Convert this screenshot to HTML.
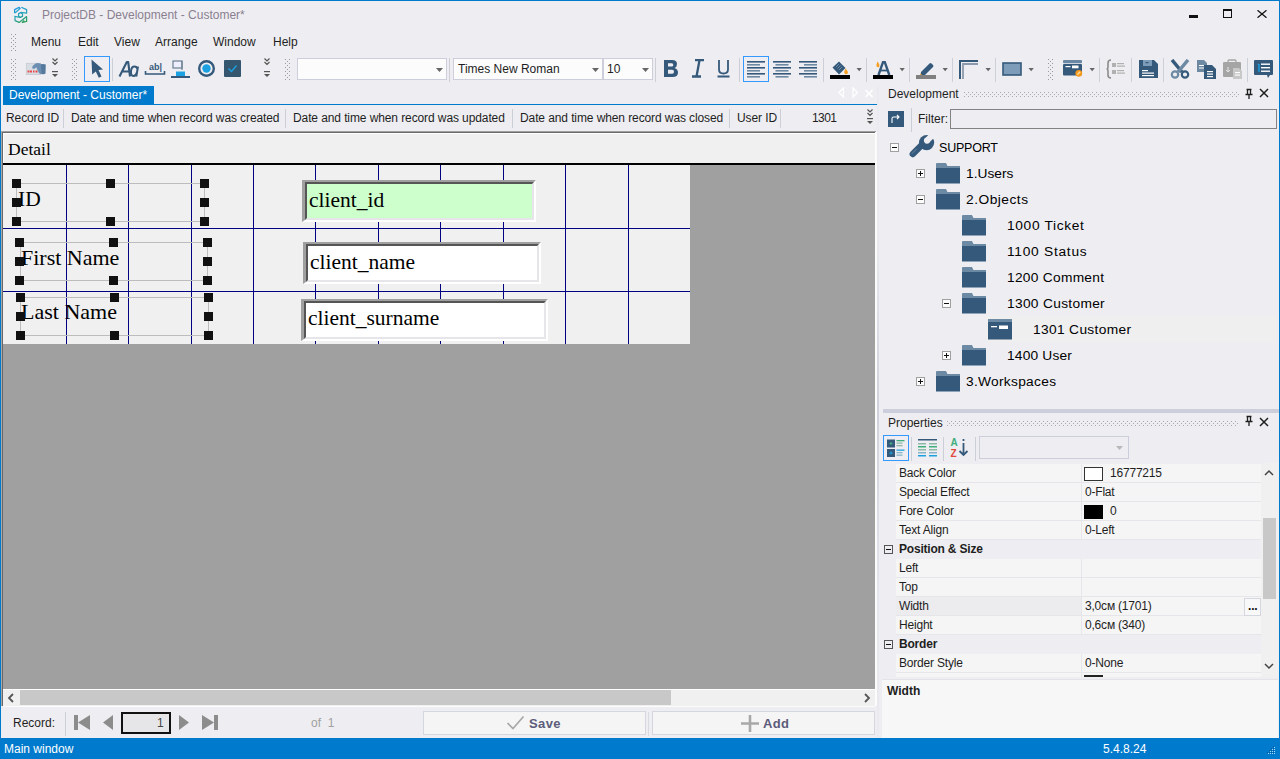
<!DOCTYPE html>
<html><head><meta charset="utf-8">
<style>
*{box-sizing:border-box;margin:0;padding:0}
html,body{width:1280px;height:759px;overflow:hidden;background:#eeeef2;font-family:"Liberation Sans",sans-serif;font-size:12px;color:#1e1e1e}
.a{position:absolute}
.t{position:absolute;white-space:pre;line-height:1}
.grip{position:absolute;width:6px;background-image:radial-gradient(circle,#999 0.8px,transparent 1px);background-size:3px 3px}
.sep{position:absolute;width:1px;background:#ccced8}
.serif{font-family:"Liberation Serif",serif}
</style></head><body>
<svg width="0" height="0" style="position:absolute"><defs><pattern id="gp" width="4" height="4" patternUnits="userSpaceOnUse"><rect x="0" y="0" width="1" height="1" fill="#9a9a9a"/><rect x="2" y="2" width="1" height="1" fill="#9a9a9a"/></pattern><pattern id="dp" width="4" height="4" patternUnits="userSpaceOnUse"><rect x="0" y="0" width="1" height="1" fill="#a8a8ae"/><rect x="2" y="2" width="1" height="1" fill="#a8a8ae"/></pattern></defs></svg>
<!-- window border -->

<!-- title bar -->
<svg class="a" style="left:10px;top:4px" width="22" height="22" viewBox="0 0 22 22">
<defs><linearGradient id="lg" gradientUnits="userSpaceOnUse" x1="4" y1="3" x2="12" y2="19"><stop offset="0" stop-color="#1e96e6"/><stop offset="0.55" stop-color="#27a3b8"/><stop offset="1" stop-color="#2c9e5a"/></linearGradient></defs>
<g fill="none" stroke="url(#lg)" stroke-width="1.25" stroke-linejoin="round">
<path d="M4.6 9.3 L4.6 5.6 L9.2 3.3 L10.2 4.4 L5.2 8.8"/>
<path d="M11.3 3.3 L16.6 5.6 L16.6 9.2 L10.8 8.4"/>
<path d="M8.6 9.6 L10.7 8.6 L12.5 10.1 L12.5 12.4 L10.4 13.4 L8.6 12.3 Z"/>
<path d="M4.3 12.4 L10.4 13.4 M5 12.6 L5 16.6 L9.2 18.4 L16.6 12.6 L16.6 17.4 L12.4 18.5 L14.2 16.5"/>
</g></svg>
<div class="t" style="left:42px;top:9px;color:#8a8090">ProjectDB - Development - Customer*</div>
<div class="a" style="left:1189px;top:15px;width:9px;height:3px;background:#111"></div>
<div class="a" style="left:1223px;top:9px;width:9px;height:9px;border:1px solid #111;border-top-width:2px"></div>
<svg class="a" style="left:1257px;top:10px" width="10" height="8" viewBox="0 0 10 8"><path d="M0.5 0.3 L9.5 7.7 M9.5 0.3 L0.5 7.7" stroke="#111" stroke-width="1.3"/></svg>

<!-- menu bar -->
<svg class="a" style="left:11px;top:34px" width="6" height="18"><rect width="6" height="18" fill="url(#gp)"/></svg>
<div class="t" style="left:31px;top:36px">Menu</div>
<div class="t" style="left:78px;top:36px">Edit</div>
<div class="t" style="left:114px;top:36px">View</div>
<div class="t" style="left:155px;top:36px">Arrange</div>
<div class="t" style="left:213px;top:36px">Window</div>
<div class="t" style="left:273px;top:36px">Help</div>

<!-- TOOLBAR -->
<!-- toolbar -->
<svg class="a" style="left:11px;top:59px" width="6" height="22"><rect width="6" height="23" fill="url(#gp)"/></svg>
<svg class="a" style="left:25px;top:60px" width="22" height="17" viewBox="0 0 22 17">
<rect x="1.2" y="3.2" width="14.5" height="11.5" fill="#d8dde3" stroke="#bfc3ca" stroke-width="0.6"/>
<rect x="2.5" y="10.5" width="2" height="2" fill="#e84848"/><rect x="5" y="10.5" width="2" height="2" fill="#e84848"/><rect x="8" y="10.5" width="1.5" height="2" fill="#e84848"/><rect x="10.5" y="10.5" width="2" height="2" fill="#e84848"/>
<path d="M7.2 8.2 Q7.5 5 10.5 3.4 Q13 2.6 15.5 3.6 L17 5 L17 13.8 Q15 14.6 13.8 12.8 L11.2 7.2 Q9.2 9.6 7.2 8.2Z" fill="#6b8fb2"/>
<path d="M16 4.2 Q18.5 3.5 20.8 4.5 L20.5 13.5 Q19 14.8 16.5 14Z" fill="#55799c"/>
</svg>
<svg class="a" style="left:51px;top:57px" width="8" height="23" viewBox="0 0 8 23">
<path d="M1.5 1.5 L4 4 L6.5 1.5 M1.5 5 L4 7.5 L6.5 5" fill="none" stroke="#555" stroke-width="1.2"/>
<rect x="1" y="14" width="6" height="1.2" fill="#555"/><path d="M1 17 L7 17 L4 20Z" fill="#555"/>
</svg>
<svg class="a" style="left:72px;top:59px" width="6" height="22"><rect width="6" height="23" fill="url(#gp)"/></svg>
<div class="a" style="left:84px;top:56px;width:26px;height:26px;border:1px solid #3399ff"></div>
<svg class="a" style="left:86px;top:58px" width="22" height="22" viewBox="0 0 22 22">
<path d="M5.5 1.5 L17 11.5 L12.5 12 L15.5 18.5 L12.8 19.8 L9.8 13.5 L6.2 16.5 Z" fill="#35597a"/>
</svg>
<div class="sep" style="left:112px;top:58px;height:23px"></div>
<svg class="a" style="left:118px;top:60px" width="22" height="18" viewBox="0 0 22 18">
<path d="M1.5 16.5 L8.8 2 L10.2 2 L12 16.5 M4.3 11.5 L11.2 11.5" fill="none" stroke="#35597a" stroke-width="2.1" stroke-linejoin="round"/>
<path d="M20 6.5 L18.3 16.5 M19.5 9 Q18.8 6.5 16.5 6.5 Q13.5 6.5 13 11 Q12.6 16 15.5 16 Q18 16 18.8 12.5" fill="none" stroke="#35597a" stroke-width="2"/>
</svg>
<svg class="a" style="left:144px;top:58px" width="22" height="20" viewBox="0 0 22 20">
<text x="5" y="12" font-family="Liberation Sans" font-size="9" font-weight="bold" fill="#35597a">ab|</text>
<path d="M1.5 13 L1.5 16 L20.5 16 L20.5 13" fill="none" stroke="#35597a" stroke-width="1.6"/>
</svg>
<svg class="a" style="left:170px;top:59px" width="21" height="20" viewBox="0 0 21 20">
<rect x="3" y="2" width="9" height="7" fill="#eef" stroke="#6a7f92" stroke-width="1.2"/>
<path d="M12 2 L12 11" stroke="#6a7f92" stroke-width="1.2"/>
<rect x="6" y="12.5" width="9" height="5" fill="#1ba1e2"/>
<rect x="1" y="17" width="19" height="2" fill="#35597a"/>
</svg>
<svg class="a" style="left:197px;top:59px" width="19" height="19" viewBox="0 0 19 19">
<circle cx="9.5" cy="9.5" r="7.3" fill="none" stroke="#35597a" stroke-width="2.4"/>
<circle cx="9.5" cy="9.5" r="4.2" fill="#1ba1e2"/>
</svg>
<svg class="a" style="left:223px;top:59px" width="19" height="19" viewBox="0 0 19 19">
<rect x="1" y="1" width="17" height="17" rx="1" fill="#34566f"/>
<path d="M5.5 9.5 L8.5 12.5 L13.5 6.5" fill="none" stroke="#1ba1e2" stroke-width="1.4"/>
</svg>
<svg class="a" style="left:263px;top:57px" width="8" height="23" viewBox="0 0 8 23">
<path d="M1.5 1.5 L4 4 L6.5 1.5 M1.5 5 L4 7.5 L6.5 5" fill="none" stroke="#555" stroke-width="1.2"/>
<rect x="1" y="14" width="6" height="1.2" fill="#555"/><path d="M1 17 L7 17 L4 20Z" fill="#555"/>
</svg>
<svg class="a" style="left:285px;top:59px" width="6" height="22"><rect width="6" height="23" fill="url(#gp)"/></svg>
<!-- combos -->
<div class="a" style="left:297px;top:58px;width:150px;height:22px;background:#fcfcfc;border:1px solid #cccedb"></div>
<svg class="a" style="left:436px;top:68px" width="8" height="5"><path d="M0 0 L7 0 L3.5 4Z" fill="#666"/></svg>
<div class="sep" style="left:449px;top:58px;height:24px"></div>
<div class="a" style="left:453px;top:58px;width:150px;height:22px;background:#fcfcfc;border:1px solid #cccedb"></div>
<div class="t" style="left:458px;top:63px">Times New Roman</div>
<svg class="a" style="left:592px;top:68px" width="8" height="5"><path d="M0 0 L7 0 L3.5 4Z" fill="#666"/></svg>
<div class="a" style="left:603px;top:58px;width:50px;height:22px;background:#fcfcfc;border:1px solid #cccedb"></div>
<div class="t" style="left:607px;top:63px">10</div>
<svg class="a" style="left:642px;top:68px" width="8" height="5"><path d="M0 0 L7 0 L3.5 4Z" fill="#666"/></svg>
<div class="sep" style="left:655px;top:58px;height:24px"></div>
<svg class="a" style="left:663px;top:59px" width="16" height="19" viewBox="0 0 16 19"><path d="M1 1 L9 1 Q14 1 14 5 Q14 8 11.5 9 Q15 10 15 13.5 Q15 18 9.5 18 L1 18 Z M5 4.3 L5 7.6 L8.8 7.6 Q10.3 7.6 10.3 6 Q10.3 4.3 8.8 4.3 Z M5 10.8 L5 14.7 L9.2 14.7 Q11 14.7 11 12.8 Q11 10.8 9.2 10.8 Z" fill="#35597a" fill-rule="evenodd"/></svg>
<svg class="a" style="left:690px;top:59px" width="16" height="19" viewBox="0 0 16 19">
<path d="M5 1.2 L14 1.2 M2 17.5 L11 17.5 M9.5 1.2 L6.5 17.5" fill="none" stroke="#35597a" stroke-width="2.3"/>
</svg>
<svg class="a" style="left:716px;top:59px" width="15" height="19" viewBox="0 0 15 19">
<path d="M3 1 L3 10.5 Q3 14.5 7.5 14.5 Q12 14.5 12 10.5 L12 1" fill="none" stroke="#35597a" stroke-width="1.8"/>
<rect x="1.5" y="16.5" width="12" height="2" fill="#35597a"/>
</svg>
<div class="sep" style="left:739px;top:58px;height:24px"></div>
<div class="a" style="left:743px;top:56px;width:26px;height:26px;border:1px solid #3399ff"></div>
<svg class="a" style="left:746px;top:59px" width="20" height="20" viewBox="0 0 20 20">
<rect x="1" y="2" width="18" height="1.6" fill="#35597a"/><rect x="1" y="5" width="13" height="1.6" fill="#6e8aa3"/>
<rect x="1" y="8" width="18" height="1.6" fill="#35597a"/><rect x="1" y="11" width="13" height="1.6" fill="#6e8aa3"/>
<rect x="1" y="14" width="18" height="1.6" fill="#35597a"/><rect x="1" y="17" width="13" height="1.6" fill="#6e8aa3"/>
</svg>
<svg class="a" style="left:772px;top:59px" width="20" height="20" viewBox="0 0 20 20">
<rect x="1" y="2" width="18" height="1.6" fill="#35597a"/><rect x="3.5" y="5" width="13" height="1.6" fill="#6e8aa3"/>
<rect x="1" y="8" width="18" height="1.6" fill="#35597a"/><rect x="3.5" y="11" width="13" height="1.6" fill="#6e8aa3"/>
<rect x="1" y="14" width="18" height="1.6" fill="#35597a"/><rect x="3.5" y="17" width="13" height="1.6" fill="#6e8aa3"/>
</svg>
<svg class="a" style="left:798px;top:59px" width="20" height="20" viewBox="0 0 20 20">
<rect x="1" y="2" width="18" height="1.6" fill="#35597a"/><rect x="6" y="5" width="13" height="1.6" fill="#6e8aa3"/>
<rect x="1" y="8" width="18" height="1.6" fill="#35597a"/><rect x="6" y="11" width="13" height="1.6" fill="#6e8aa3"/>
<rect x="1" y="14" width="18" height="1.6" fill="#35597a"/><rect x="6" y="17" width="13" height="1.6" fill="#6e8aa3"/>
</svg>
<div class="sep" style="left:823px;top:58px;height:24px"></div>
<svg class="a" style="left:829px;top:59px" width="22" height="21" viewBox="0 0 22 21">
<path d="M3.5 8.5 L10 2.5 L16.5 9 L10 15.5 Z" fill="#35597a"/>
<path d="M7 8 L10 5 M8.5 9.5 L11.5 6.5 M10 11 L13 8" stroke="#7d98b0" stroke-width="0.8"/>
<path d="M16.5 9.5 Q19.5 12.5 18.8 14.2 Q17.8 15.6 16.2 15 Q14.8 14.2 15.3 12.5 Z" fill="#f5a020"/>
<rect x="1" y="16" width="20" height="4" fill="#000"/>
</svg>
<svg class="a" style="left:856px;top:68px" width="7" height="5"><path d="M0.5 0 L5.8 0 L3.15 3.2Z" fill="#666"/></svg>
<div class="sep" style="left:866px;top:58px;height:24px"></div>
<svg class="a" style="left:872px;top:59px" width="22" height="21" viewBox="0 0 22 21">
<path d="M6.5 16 L11 3.2 L12.8 3.2 L17.3 16" fill="none" stroke="#35597a" stroke-width="2.4"/>
<path d="M8.5 11.5 L15.5 11.5" stroke="#35597a" stroke-width="1.8"/>
<path d="M5.5 2.5 Q8 5.5 7.5 7.2 Q6.6 8.6 5.2 8 Q4 7.2 4.5 5.5 Z" fill="#f5a020"/>
<rect x="1" y="16" width="20" height="4" fill="#000"/>
</svg>
<svg class="a" style="left:899px;top:68px" width="7" height="5"><path d="M0.5 0 L5.8 0 L3.15 3.2Z" fill="#666"/></svg>
<div class="sep" style="left:909px;top:58px;height:24px"></div>
<svg class="a" style="left:915px;top:59px" width="22" height="21" viewBox="0 0 22 21">
<path d="M6 13 L14.5 4.5 Q15.5 3.5 16.5 4.5 L18 6 Q19 7 18 8 L9.5 16.5 L5.5 16.5 Z" fill="#35597a"/>
<path d="M5.5 14.5 L7.5 16.5 L5 17 Z" fill="#f5a020"/>
<rect x="1" y="16" width="20" height="4" fill="#808080"/>
</svg>
<svg class="a" style="left:942px;top:68px" width="7" height="5"><path d="M0.5 0 L5.8 0 L3.15 3.2Z" fill="#666"/></svg>
<div class="sep" style="left:952px;top:58px;height:24px"></div>
<svg class="a" style="left:958px;top:59px" width="22" height="21" viewBox="0 0 22 21">
<path d="M2 20 L2 2 L20 2" fill="none" stroke="#35597a" stroke-width="2"/>
<path d="M5 20 L5 5 L20 5" fill="none" stroke="#8a9aac" stroke-width="1.8"/>
</svg>
<svg class="a" style="left:985px;top:68px" width="7" height="5"><path d="M0.5 0 L5.8 0 L3.15 3.2Z" fill="#666"/></svg>
<div class="sep" style="left:995px;top:58px;height:24px"></div>
<svg class="a" style="left:1002px;top:62px" width="20" height="14" viewBox="0 0 20 14">
<rect x="1" y="1" width="18" height="12" fill="#7c9cba" stroke="#35597a" stroke-width="1.6"/>
</svg>
<svg class="a" style="left:1028px;top:68px" width="7" height="5"><path d="M0.5 0 L5.8 0 L3.15 3.2Z" fill="#666"/></svg>
<svg class="a" style="left:1048px;top:59px" width="6" height="22"><rect width="6" height="23" fill="url(#gp)"/></svg>
<svg class="a" style="left:1062px;top:59px" width="22" height="20" viewBox="0 0 22 20">
<rect x="1" y="1" width="19" height="3.2" rx="1" fill="#6a88a3"/>
<rect x="1" y="5" width="19" height="11.5" rx="1" fill="#35597a"/>
<rect x="3.5" y="7" width="5" height="1.2" fill="#fff"/><rect x="10" y="6.5" width="6.5" height="2.8" fill="#fff"/>
<circle cx="16.8" cy="14.3" r="3.4" fill="#f59a1c"/><path d="M15.3 15.6 L18.2 12.8" stroke="#ffe0b0" stroke-width="1.3"/>
</svg>
<svg class="a" style="left:1089px;top:68px" width="7" height="5"><path d="M0.5 0 L5.8 0 L3.15 3.2Z" fill="#666"/></svg>
<div class="sep" style="left:1099px;top:58px;height:24px"></div>
<svg class="a" style="left:1106px;top:59px" width="20" height="20" viewBox="0 0 20 20">
<path d="M5 1 Q2 1 2 4 L2 8 Q2 10 0.5 10 Q2 10 2 12 L2 16 Q2 19 5 19" fill="none" stroke="#8c8c8c" stroke-width="1.6"/>
<rect x="6" y="4" width="4" height="4" fill="#b0b0b0"/><rect x="11" y="4" width="7" height="1.2" fill="#b0b0b0"/><rect x="11" y="6.5" width="8" height="1.2" fill="#b0b0b0"/>
<rect x="6" y="11" width="4" height="4" fill="#b0b0b0"/><rect x="11" y="11" width="7" height="1.2" fill="#b0b0b0"/><rect x="11" y="13.5" width="8" height="1.2" fill="#b0b0b0"/>
</svg>
<div class="sep" style="left:1131px;top:58px;height:24px"></div>
<svg class="a" style="left:1137px;top:59px" width="22" height="20" viewBox="0 0 22 20">
<path d="M2 1 L17 1 L21 5 L21 19 L2 19Z" fill="#35597a"/>
<rect x="6" y="1" width="9" height="6" fill="#7c9cba"/><rect x="8.5" y="3" width="3" height="1.2" fill="#35597a"/>
<rect x="5" y="11" width="6" height="1.2" fill="#fff"/><rect x="5" y="13.5" width="12" height="1.2" fill="#fff"/><rect x="5" y="16" width="12" height="1.2" fill="#fff"/>
</svg>
<div class="sep" style="left:1163px;top:58px;height:24px"></div>
<svg class="a" style="left:1170px;top:59px" width="20" height="20" viewBox="0 0 20 20">
<path d="M2 1 L12 13" stroke="#35597a" stroke-width="3.5"/>
<path d="M18 1 L8 13" stroke="#6e8aa3" stroke-width="3.5"/>
<circle cx="5" cy="15.5" r="3.2" fill="none" stroke="#6e8aa3" stroke-width="2.2"/>
<circle cx="15" cy="15.5" r="3.2" fill="none" stroke="#35597a" stroke-width="2.2"/>
</svg>
<svg class="a" style="left:1196px;top:59px" width="21" height="21" viewBox="0 0 21 21">
<path d="M1 1 L8 1 L11 4 L11 13 L1 13Z" fill="#6e8aa3"/>
<rect x="3" y="6" width="6" height="1" fill="#fff"/><rect x="3" y="8.5" width="6" height="1" fill="#fff"/>
<path d="M8 6 L16 6 L20 10 L20 20 L8 20Z" fill="#35597a"/>
<rect x="11" y="12" width="6" height="1.2" fill="#fff"/><rect x="11" y="14.5" width="6" height="1.2" fill="#fff"/><rect x="11" y="17" width="6" height="1.2" fill="#fff"/>
</svg>
<svg class="a" style="left:1222px;top:59px" width="21" height="20" viewBox="0 0 21 20">
<rect x="1" y="3" width="18" height="15" rx="1" fill="#a5a5a5"/>
<rect x="6" y="1" width="8" height="3" rx="1" fill="none" stroke="#a5a5a5" stroke-width="1.3"/>
<path d="M6 8 L6 13 M4 11 L6 13 L8 11" fill="none" stroke="#e6e6e6" stroke-width="1"/>
<path d="M11 9 L17 9 L20 12 L20 20 L11 20Z" fill="#c8c8c8"/>
<rect x="13" y="13" width="5" height="1.1" fill="#fff"/><rect x="13" y="15.5" width="5" height="1.1" fill="#fff"/>
</svg>
<div class="sep" style="left:1247px;top:58px;height:24px"></div>
<svg class="a" style="left:1253px;top:59px" width="21" height="21" viewBox="0 0 21 21">
<path d="M1 2 Q1 1 2 1 L19 1 Q20 1 20 2 L20 15 Q20 16 19 16 L17 16 L15 19 L14 16 L2 16 Q1 16 1 15Z" fill="#35597a"/>
<path d="M6 5 L6 13 M5 6 L6 5" stroke="#1ba1e2" stroke-width="1.4"/>
<rect x="8" y="4.5" width="9" height="1.4" fill="#fff"/><rect x="8" y="8" width="9" height="1.4" fill="#fff"/><rect x="8" y="11.5" width="9" height="1.4" fill="#fff"/>
</svg>


<!-- document tab -->
<div class="a" style="left:3px;top:86px;width:151px;height:18px;background:#007acc"></div>
<div class="t" style="left:9px;top:89px;color:#fff">Development - Customer*</div>
<div class="a" style="left:3px;top:104px;width:874px;height:1px;background:#007acc"></div>

<!-- record header -->
<div class="a" style="left:3px;top:105px;width:872px;height:27px;background:#eeeef2"></div>
<div class="t" style="left:6px;top:112px;letter-spacing:-0.1px">Record ID</div>
<div class="sep" style="left:63px;top:109px;height:19px"></div>
<div class="t" style="left:71px;top:112px;letter-spacing:-0.1px">Date and time when record was created</div>
<div class="sep" style="left:285px;top:109px;height:19px"></div>
<div class="t" style="left:293px;top:112px;letter-spacing:-0.1px">Date and time when record was updated</div>
<div class="sep" style="left:512px;top:109px;height:19px"></div>
<div class="t" style="left:520px;top:112px;letter-spacing:-0.1px">Date and time when record was closed</div>
<div class="sep" style="left:729px;top:109px;height:19px"></div>
<div class="t" style="left:737px;top:112px;letter-spacing:-0.1px">User ID</div>
<div class="sep" style="left:780px;top:109px;height:19px"></div>
<div class="t" style="left:812px;top:112px;letter-spacing:-0.6px">1301</div>

<!-- form area -->
<!-- tab strip buttons -->
<svg class="a" style="left:838px;top:87px" width="36" height="12" viewBox="0 0 36 12">
<path d="M5.5 1 L1 5.5 L5.5 10 Z" fill="none" stroke="#fff" stroke-width="1.2"/>
<path d="M15 1 L19.5 5.5 L15 10 Z" fill="none" stroke="#fff" stroke-width="1.2"/>
<path d="M27.5 3 L34.5 10 M34.5 3 L27.5 10" stroke="#fff" stroke-width="1.6"/>
</svg>
<svg class="a" style="left:866px;top:108px" width="8" height="18" viewBox="0 0 8 18">
<path d="M1.5 1.5 L4 4 L6.5 1.5 M1.5 5 L4 7.5 L6.5 5" fill="none" stroke="#555" stroke-width="1.2"/>
<rect x="1" y="10" width="6" height="1.2" fill="#555"/><path d="M1 13 L7 13 L4 16Z" fill="#555"/>
</svg>
<!-- form container -->
<div class="a" style="left:2px;top:131px;width:874px;height:575px;background:#a0a0a0"></div>
<div class="a" style="left:1px;top:131px;width:875px;height:1px;background:#a0a0a0"></div>
<div class="a" style="left:1px;top:131px;width:1px;height:575px;background:#a8a8a8"></div>
<div class="a" style="left:2px;top:132px;width:874px;height:1px;background:#696969"></div>
<div class="a" style="left:2px;top:132px;width:1px;height:574px;background:#696969"></div>
<div class="a" style="left:3px;top:133px;width:872px;height:1px;background:#fff"></div>
<div class="a" style="left:3px;top:133px;width:1px;height:30px;background:#fff"></div>
<div class="a" style="left:875px;top:132px;width:2px;height:574px;background:#fcfcfc"></div>
<div class="a" style="left:877px;top:86px;width:2px;height:652px;background:linear-gradient(#eaeaf0 0px,#eaeaf0 150px,#cfd1dc 320px,#e6e6ee 520px,#eaeaf0 652px)"></div>
<div class="a" style="left:4px;top:134px;width:871px;height:29px;background:#f0f0f0"></div>
<div class="t serif" style="left:8px;top:141px;font-size:17.5px;color:#000">Detail</div>
<div class="a" style="left:3px;top:163px;width:872px;height:2px;background:#000"></div>
<!-- grid -->
<div class="a" style="left:3px;top:165px;width:687px;height:179px;background:#f0f0f0"></div>
<div class="a" style="left:66px;top:165px;width:1px;height:179px;background:#000080"></div>
<div class="a" style="left:128px;top:165px;width:1px;height:179px;background:#000080"></div>
<div class="a" style="left:191px;top:165px;width:1px;height:179px;background:#000080"></div>
<div class="a" style="left:253px;top:165px;width:1px;height:179px;background:#000080"></div>
<div class="a" style="left:315px;top:165px;width:1px;height:179px;background:#000080"></div>
<div class="a" style="left:378px;top:165px;width:1px;height:179px;background:#000080"></div>
<div class="a" style="left:440px;top:165px;width:1px;height:179px;background:#000080"></div>
<div class="a" style="left:503px;top:165px;width:1px;height:179px;background:#000080"></div>
<div class="a" style="left:565px;top:165px;width:1px;height:179px;background:#000080"></div>
<div class="a" style="left:628px;top:165px;width:1px;height:179px;background:#000080"></div>
<div class="a" style="left:3px;top:228px;width:687px;height:1px;background:#000080"></div>
<div class="a" style="left:3px;top:291px;width:687px;height:1px;background:#000080"></div>
<!-- labels -->
<div class="t serif" style="left:18px;top:189px;font-size:21.5px;color:#000">ID</div>
<div class="t serif" style="left:21px;top:247px;font-size:22px;color:#000">First Name</div>
<div class="t serif" style="left:21px;top:301px;font-size:22px;color:#000">Last Name</div>
<!-- selection rects -->
<div class="a" style="left:16px;top:183px;width:189px;height:39px;border:1px solid #bdbdbd"></div>
<div class="a" style="left:20px;top:242px;width:188px;height:39px;border:1px solid #bdbdbd"></div>
<div class="a" style="left:20px;top:297px;width:189px;height:39px;border:1px solid #bdbdbd"></div>
<!-- handles -->
<div class="a" style="left:12px;top:179px;width:9px;height:9px;background:#111"></div>
<div class="a" style="left:12px;top:198px;width:9px;height:9px;background:#111"></div>
<div class="a" style="left:12px;top:217px;width:9px;height:9px;background:#111"></div>
<div class="a" style="left:106px;top:179px;width:9px;height:9px;background:#111"></div>
<div class="a" style="left:106px;top:217px;width:9px;height:9px;background:#111"></div>
<div class="a" style="left:200px;top:179px;width:9px;height:9px;background:#111"></div>
<div class="a" style="left:200px;top:198px;width:9px;height:9px;background:#111"></div>
<div class="a" style="left:200px;top:217px;width:9px;height:9px;background:#111"></div>
<div class="a" style="left:15px;top:238px;width:9px;height:9px;background:#111"></div>
<div class="a" style="left:15px;top:257px;width:9px;height:9px;background:#111"></div>
<div class="a" style="left:15px;top:276px;width:9px;height:9px;background:#111"></div>
<div class="a" style="left:109px;top:238px;width:9px;height:9px;background:#111"></div>
<div class="a" style="left:109px;top:276px;width:9px;height:9px;background:#111"></div>
<div class="a" style="left:203px;top:238px;width:9px;height:9px;background:#111"></div>
<div class="a" style="left:203px;top:257px;width:9px;height:9px;background:#111"></div>
<div class="a" style="left:203px;top:276px;width:9px;height:9px;background:#111"></div>
<div class="a" style="left:16px;top:293px;width:9px;height:9px;background:#111"></div>
<div class="a" style="left:16px;top:312px;width:9px;height:9px;background:#111"></div>
<div class="a" style="left:16px;top:331px;width:9px;height:9px;background:#111"></div>
<div class="a" style="left:110px;top:293px;width:9px;height:9px;background:#111"></div>
<div class="a" style="left:110px;top:331px;width:9px;height:9px;background:#111"></div>
<div class="a" style="left:204px;top:293px;width:9px;height:9px;background:#111"></div>
<div class="a" style="left:204px;top:312px;width:9px;height:9px;background:#111"></div>
<div class="a" style="left:204px;top:331px;width:9px;height:9px;background:#111"></div>
<!-- text boxes -->
<div class="a" style="left:302px;top:180px;width:234px;height:42px;border-style:solid;border-width:2px 2px 2px 3px;border-color:#a0a0a0 #fff #fff #a0a0a0"><div style="width:100%;height:100%;background:#ccffcc;border-style:solid;border-width:2px 2px 2px 2px;border-color:#555 #e6e6ea #e6e6ea #555"></div></div>
<div class="t serif" style="left:309px;top:190px;font-size:21.5px;color:#000">client_id</div>
<div class="a" style="left:303px;top:242px;width:238px;height:42px;border-style:solid;border-width:2px 2px 2px 3px;border-color:#a0a0a0 #fff #fff #a0a0a0"><div style="width:100%;height:100%;background:#fff;border-style:solid;border-width:2px 2px 2px 2px;border-color:#555 #e6e6ea #e6e6ea #555"></div></div>
<div class="t serif" style="left:310px;top:252px;font-size:21.5px;color:#000">client_name</div>
<div class="a" style="left:301px;top:299px;width:247px;height:42px;border-style:solid;border-width:2px 2px 2px 3px;border-color:#a0a0a0 #fff #fff #a0a0a0"><div style="width:100%;height:100%;background:#fff;border-style:solid;border-width:2px 2px 2px 2px;border-color:#555 #e6e6ea #e6e6ea #555"></div></div>
<div class="t serif" style="left:308px;top:308px;font-size:21.5px;color:#000">client_surname</div>
<!-- h scrollbar -->
<div class="a" style="left:3px;top:689px;width:872px;height:1px;background:#fff"></div>
<div class="a" style="left:3px;top:690px;width:872px;height:16px;background:#f0f0f0"></div>
<div class="a" style="left:20px;top:690px;width:651px;height:15px;background:#c8c8c8"></div>
<div class="a" style="left:3px;top:706px;width:872px;height:1px;background:#fcfcfc"></div>
<svg class="a" style="left:7px;top:693px" width="8" height="10" viewBox="0 0 8 10"><path d="M6 1 L2 5 L6 9" fill="none" stroke="#555" stroke-width="1.8"/></svg>
<svg class="a" style="left:863px;top:693px" width="8" height="10" viewBox="0 0 8 10"><path d="M2 1 L6 5 L2 9" fill="none" stroke="#555" stroke-width="1.8"/></svg>
<!-- record nav -->
<div class="t" style="left:13px;top:717px">Record:</div>
<div class="sep" style="left:65px;top:712px;height:24px"></div>
<svg class="a" style="left:73px;top:714px" width="146" height="18" viewBox="0 0 146 18">
<rect x="1" y="1" width="4" height="15" fill="#8c8c8c"/><path d="M17 1 L5 8.5 L17 16Z" fill="#8c8c8c"/>
<path d="M40 1 L30 8.5 L40 16Z" fill="#8c8c8c"/>
<path d="M106 1 L116 8.5 L106 16Z" fill="#8c8c8c"/>
<path d="M129 1 L141 8.5 L129 16Z" fill="#8c8c8c"/><rect x="141" y="1" width="4" height="15" fill="#8c8c8c"/>
</svg>
<div class="a" style="left:121px;top:712px;width:50px;height:22px;border:2px solid #111;background:#e6e6e8"></div>
<div class="t" style="left:157px;top:717px;color:#444">1</div>
<div class="t" style="left:311px;top:717px;color:#a0a0a0">of&nbsp;&nbsp;1</div>
<div class="a" style="left:423px;top:711px;width:223px;height:24px;background:#f5f5f5;border:1px solid #d5d7e0"></div>
<svg class="a" style="left:506px;top:714px" width="20" height="18" viewBox="0 0 20 18"><path d="M1.5 9 L7 14.5 L17.5 2.5" fill="none" stroke="#a8a8a8" stroke-width="1.7"/></svg>
<div class="t" style="left:529px;top:717px;font-size:13px;font-weight:bold;color:#5c5c7a;letter-spacing:0.4px">Save</div>
<div class="sep" style="left:648px;top:712px;height:24px;background:#d8dae2"></div>
<div class="a" style="left:652px;top:711px;width:223px;height:24px;background:#f5f5f5;border:1px solid #d5d7e0"></div>
<svg class="a" style="left:740px;top:714px" width="20" height="19" viewBox="0 0 20 19"><path d="M10 1 L10 18 M1 9.5 L19 9.5" stroke="#a8a8a8" stroke-width="2.6"/></svg>
<div class="t" style="left:763px;top:717px;font-size:13px;font-weight:bold;color:#5c5c7a;letter-spacing:0.3px">Add</div>


<!-- status bar -->
<div class="a" style="left:0;top:738px;width:1280px;height:21px;background:#007acc"></div>
<div class="t" style="left:4px;top:743px;color:#fff">Main window</div>
<div class="t" style="left:1103px;top:743px;color:#fff">5.4.8.24</div>

<svg class="a" style="left:1265px;top:744px" width="12" height="12"><g fill="#00589a"><rect x="8" y="2" width="1" height="1"/><rect x="6" y="4" width="1" height="1"/><rect x="8" y="4" width="1" height="1"/><rect x="4" y="6" width="1" height="1"/><rect x="6" y="6" width="1" height="1"/><rect x="8" y="6" width="1" height="1"/><rect x="2" y="8" width="1" height="1"/><rect x="4" y="8" width="1" height="1"/><rect x="6" y="8" width="1" height="1"/><rect x="8" y="8" width="1" height="1"/></g><g fill="#a8dcff"><rect x="9" y="3" width="1" height="1"/><rect x="7" y="5" width="1" height="1"/><rect x="9" y="5" width="1" height="1"/><rect x="5" y="7" width="1" height="1"/><rect x="7" y="7" width="1" height="1"/><rect x="9" y="7" width="1" height="1"/><rect x="3" y="9" width="1" height="1"/><rect x="5" y="9" width="1" height="1"/><rect x="7" y="9" width="1" height="1"/><rect x="9" y="9" width="1" height="1"/></g></svg>
<!-- RIGHT PANEL -->
<!-- right panel: Development -->
<div class="t" style="left:888px;top:88px;color:#1e1e1e">Development</div>
<svg class="a" style="left:964px;top:92px" width="276" height="5"><rect width="276" height="5" fill="url(#dp)"/></svg>
<svg class="a" style="left:1243px;top:88px" width="12" height="12" viewBox="0 0 12 12"><path d="M3.5 1.5 L8.5 1.5 M4.5 1.5 L4.5 6.5 M7.5 1.5 L7.5 6.5 M2.5 6.5 L9.5 6.5 M6 6.5 L6 11" fill="none" stroke="#1e1e1e" stroke-width="1.3"/></svg>
<svg class="a" style="left:1259px;top:88px" width="10" height="10" viewBox="0 0 10 10"><path d="M1 1 L9 9 M9 1 L1 9" stroke="#1e1e1e" stroke-width="1.5"/></svg>
<div class="a" style="left:986px;top:316px;width:290px;height:26px;background:#efeff0"></div>
<!-- tree toolbar -->
<svg class="a" style="left:888px;top:111px" width="16" height="16" viewBox="0 0 16 16"><rect width="16" height="16" fill="#35597a"/><path d="M4 12 L4 7.5 Q4 6 5.5 6 L11 6 M9 4 L11 6 L9 8" fill="none" stroke="#fff" stroke-width="1.1"/></svg>
<div class="sep" style="left:911px;top:108px;height:24px"></div>
<div class="t" style="left:918px;top:113px">Filter:</div>
<div class="a" style="left:950px;top:109px;width:327px;height:20px;border:1px solid #828282;background:#eeeef2"></div>
<!-- tree -->
<svg class="a" style="left:890px;top:143px" width="9" height="9" viewBox="0 0 9 9"><rect x="0.5" y="0.5" width="8" height="8" fill="#fcfcfc" stroke="#a0a0a0"/><path d="M2 4.5 L7 4.5" stroke="#111" stroke-width="1"/></svg>
<svg class="a" style="left:908px;top:133px" width="27" height="26" viewBox="0 0 27 26"><path d="M4.8 21 L13.5 12.3" stroke="#35597a" stroke-width="6.4" stroke-linecap="round"/><circle cx="18.6" cy="9.6" r="7.6" fill="#35597a"/><circle cx="19" cy="7.6" r="3.1" fill="#eeeef2"/><path d="M16.9 5.5 L21.1 9.7 L28 2.8 L23.8 -1.4Z" fill="#eeeef2"/><path d="M3.8 20.8 L8.8 15.8" stroke="#7d98b0" stroke-width="0.7"/></svg>
<div class="t" style="left:939px;top:142px;font-size:12.5px;letter-spacing:-0.2px;color:#000">SUPPORT</div>
<svg class="a" style="left:916px;top:169px" width="9" height="9" viewBox="0 0 9 9"><rect x="0.5" y="0.5" width="8" height="8" fill="#fcfcfc" stroke="#a0a0a0"/><path d="M2 4.5 L7 4.5 M4.5 2 L4.5 7" stroke="#111" stroke-width="1"/></svg>
<svg class="a" style="left:936px;top:163px" width="24" height="21" viewBox="0 0 24 21"><path d="M0 1 Q0 0 1 0 L10 0 L11.5 3 L24 3 L24 20 L0 20Z" fill="#6d8aa5"/><rect x="0" y="5" width="24" height="15.5" fill="#35597a"/></svg>
<div class="t" style="left:966px;top:168px;font-size:12.5px;letter-spacing:0px;color:#000;transform:scaleX(1.1);transform-origin:0 0">1.Users</div>
<svg class="a" style="left:916px;top:195px" width="9" height="9" viewBox="0 0 9 9"><rect x="0.5" y="0.5" width="8" height="8" fill="#fcfcfc" stroke="#a0a0a0"/><path d="M2 4.5 L7 4.5" stroke="#111" stroke-width="1"/></svg>
<svg class="a" style="left:936px;top:189px" width="24" height="21" viewBox="0 0 24 21"><path d="M0 1 Q0 0 1 0 L10 0 L11.5 3 L24 3 L24 20 L0 20Z" fill="#6d8aa5"/><rect x="0" y="5" width="24" height="15.5" fill="#35597a"/></svg>
<div class="t" style="left:966px;top:194px;font-size:12.5px;letter-spacing:0.45px;color:#000;transform:scaleX(1.1);transform-origin:0 0">2.Objects</div>
<svg class="a" style="left:962px;top:215px" width="24" height="21" viewBox="0 0 24 21"><path d="M0 1 Q0 0 1 0 L10 0 L11.5 3 L24 3 L24 20 L0 20Z" fill="#6d8aa5"/><rect x="0" y="5" width="24" height="15.5" fill="#35597a"/></svg>
<div class="t" style="left:1007px;top:220px;font-size:12.5px;letter-spacing:0.6px;color:#000;transform:scaleX(1.1);transform-origin:0 0">1000 Ticket</div>
<svg class="a" style="left:962px;top:241px" width="24" height="21" viewBox="0 0 24 21"><path d="M0 1 Q0 0 1 0 L10 0 L11.5 3 L24 3 L24 20 L0 20Z" fill="#6d8aa5"/><rect x="0" y="5" width="24" height="15.5" fill="#35597a"/></svg>
<div class="t" style="left:1007px;top:246px;font-size:12.5px;letter-spacing:0.66px;color:#000;transform:scaleX(1.1);transform-origin:0 0">1100 Status</div>
<svg class="a" style="left:962px;top:267px" width="24" height="21" viewBox="0 0 24 21"><path d="M0 1 Q0 0 1 0 L10 0 L11.5 3 L24 3 L24 20 L0 20Z" fill="#6d8aa5"/><rect x="0" y="5" width="24" height="15.5" fill="#35597a"/></svg>
<div class="t" style="left:1007px;top:272px;font-size:12.5px;letter-spacing:0.25px;color:#000;transform:scaleX(1.1);transform-origin:0 0">1200 Comment</div>
<svg class="a" style="left:942px;top:299px" width="9" height="9" viewBox="0 0 9 9"><rect x="0.5" y="0.5" width="8" height="8" fill="#fcfcfc" stroke="#a0a0a0"/><path d="M2 4.5 L7 4.5" stroke="#111" stroke-width="1"/></svg>
<svg class="a" style="left:962px;top:293px" width="24" height="21" viewBox="0 0 24 21"><path d="M0 1 Q0 0 1 0 L10 0 L11.5 3 L24 3 L24 20 L0 20Z" fill="#6d8aa5"/><rect x="0" y="5" width="24" height="15.5" fill="#35597a"/></svg>
<div class="t" style="left:1007px;top:298px;font-size:12.5px;letter-spacing:0.28px;color:#000;transform:scaleX(1.1);transform-origin:0 0">1300 Customer</div>
<svg class="a" style="left:988px;top:319px" width="24" height="21" viewBox="0 0 24 21"><rect x="0" y="0" width="24" height="20.5" fill="#35597a"/><rect x="0" y="0" width="24" height="3" fill="#6d8aa5"/><rect x="3" y="7" width="6" height="1.3" fill="#fff"/><rect x="11" y="6.5" width="9" height="3.5" fill="#fff"/></svg>
<div class="t" style="left:1033px;top:324px;font-size:12.5px;letter-spacing:0.31px;color:#000;transform:scaleX(1.1);transform-origin:0 0">1301 Customer</div>
<svg class="a" style="left:942px;top:351px" width="9" height="9" viewBox="0 0 9 9"><rect x="0.5" y="0.5" width="8" height="8" fill="#fcfcfc" stroke="#a0a0a0"/><path d="M2 4.5 L7 4.5 M4.5 2 L4.5 7" stroke="#111" stroke-width="1"/></svg>
<svg class="a" style="left:962px;top:345px" width="24" height="21" viewBox="0 0 24 21"><path d="M0 1 Q0 0 1 0 L10 0 L11.5 3 L24 3 L24 20 L0 20Z" fill="#6d8aa5"/><rect x="0" y="5" width="24" height="15.5" fill="#35597a"/></svg>
<div class="t" style="left:1007px;top:350px;font-size:12.5px;letter-spacing:0.16px;color:#000;transform:scaleX(1.1);transform-origin:0 0">1400 User</div>
<svg class="a" style="left:916px;top:377px" width="9" height="9" viewBox="0 0 9 9"><rect x="0.5" y="0.5" width="8" height="8" fill="#fcfcfc" stroke="#a0a0a0"/><path d="M2 4.5 L7 4.5 M4.5 2 L4.5 7" stroke="#111" stroke-width="1"/></svg>
<svg class="a" style="left:936px;top:371px" width="24" height="21" viewBox="0 0 24 21"><path d="M0 1 Q0 0 1 0 L10 0 L11.5 3 L24 3 L24 20 L0 20Z" fill="#6d8aa5"/><rect x="0" y="5" width="24" height="15.5" fill="#35597a"/></svg>
<div class="t" style="left:966px;top:376px;font-size:12.5px;letter-spacing:0.26px;color:#000;transform:scaleX(1.1);transform-origin:0 0">3.Workspaces</div>
<!-- splitter -->
<div class="a" style="left:883px;top:409px;width:397px;height:4px;background:#cccedb"></div>
<!-- Properties -->
<div class="t" style="left:888px;top:417px">Properties</div>
<svg class="a" style="left:947px;top:421px" width="292" height="5"><rect width="292" height="5" fill="url(#dp)"/></svg>
<svg class="a" style="left:1243px;top:415px" width="12" height="12" viewBox="0 0 12 12"><path d="M3.5 1.5 L8.5 1.5 M4.5 1.5 L4.5 6.5 M7.5 1.5 L7.5 6.5 M2.5 6.5 L9.5 6.5 M6 6.5 L6 11" fill="none" stroke="#1e1e1e" stroke-width="1.3"/></svg>
<svg class="a" style="left:1259px;top:417px" width="10" height="10" viewBox="0 0 10 10"><path d="M1 1 L9 9 M9 1 L1 9" stroke="#1e1e1e" stroke-width="1.5"/></svg>
<div class="a" style="left:883px;top:435px;width:26px;height:26px;border:1px solid #3399ff"></div>
<svg class="a" style="left:886px;top:438px" width="20" height="20" viewBox="0 0 20 20">
<rect x="1" y="1.5" width="8" height="8" fill="#35597a"/><rect x="1" y="11" width="8" height="8" fill="#35597a"/>
<path d="M3.5 5.5 L6.5 5.5 M5 4 L5 7" stroke="#3fae7c" stroke-width="1.1"/><path d="M3.5 15 L6.5 15 M5 13.5 L5 16.5" stroke="#1ba1e2" stroke-width="1.1"/>
<rect x="10.5" y="2" width="8" height="1.3" fill="#3fae7c"/><rect x="10.5" y="4.5" width="6" height="1.3" fill="#8fb8a8"/><rect x="10.5" y="7" width="6" height="1.3" fill="#8fb8a8"/>
<rect x="10.5" y="11.5" width="8" height="1.3" fill="#1ba1e2"/><rect x="10.5" y="14" width="6" height="1.3" fill="#88b4c8"/><rect x="10.5" y="16.5" width="6" height="1.3" fill="#88b4c8"/>
</svg>
<div class="sep" style="left:911px;top:437px;height:24px"></div>
<svg class="a" style="left:917px;top:438px" width="21" height="20" viewBox="0 0 21 20">
<rect x="1" y="1" width="19" height="1.5" fill="#35597a"/>
<rect x="1" y="5" width="8" height="1.5" fill="#8fb8a8"/><rect x="12" y="5" width="8" height="1.5" fill="#8fb8a8"/>
<rect x="1" y="8" width="8" height="1.5" fill="#3fae7c"/><rect x="12" y="8" width="8" height="1.5" fill="#3fae7c"/>
<rect x="1" y="11" width="8" height="1.5" fill="#8fb8a8"/><rect x="12" y="11" width="8" height="1.5" fill="#8fb8a8"/>
<rect x="1" y="14" width="8" height="1.5" fill="#88b4c8"/><rect x="12" y="14" width="8" height="1.5" fill="#88b4c8"/>
<rect x="1" y="17" width="8" height="1.5" fill="#1ba1e2"/><rect x="12" y="17" width="8" height="1.5" fill="#1ba1e2"/>
</svg>
<div class="sep" style="left:943px;top:437px;height:24px"></div>
<svg class="a" style="left:950px;top:437px" width="20" height="21" viewBox="0 0 20 21">
<text x="0.5" y="9" font-family="Liberation Sans" font-weight="bold" font-size="10" fill="#3fae7c">A</text>
<text x="0.5" y="20" font-family="Liberation Sans" font-weight="bold" font-size="10" fill="#e04a3c">Z</text>
<path d="M13.5 2 L13.5 4 M13.5 6 L13.5 18 M9.5 14 L13.5 18 L17.5 14" fill="none" stroke="#35597a" stroke-width="1.8"/>
</svg>
<div class="sep" style="left:975px;top:437px;height:24px"></div>
<div class="a" style="left:979px;top:436px;width:150px;height:23px;border:1px solid #cccedb;background:#eeeef2"></div>
<svg class="a" style="left:1116px;top:446px" width="8" height="5"><path d="M0 0 L7 0 L3.5 4Z" fill="#b8b8b8"/></svg>
<!-- property grid -->
<div class="a" style="left:882px;top:464px;width:379px;height:213px;background:#eeeef2;overflow:hidden;letter-spacing:-0.2px" id="pg">
<div class="a" style="left:14px;top:0px;width:185px;height:18px;background:#f5f5f5"></div>
<div class="a" style="left:200px;top:0px;width:179px;height:18px;background:#f5f5f5"></div>
<div class="a" style="left:14px;top:18px;width:365px;height:1px;background:#e6e6ea"></div>
<div class="a" style="left:199px;top:0px;width:1px;height:18px;background:#e6e6ea"></div>
<div class="t" style="left:17px;top:3px;color:#1e1e1e">Back Color</div>
<div class="a" style="left:202px;top:3px;width:19px;height:14px;border:1px solid #333;background:#fff"></div>
<div class="t" style="left:228px;top:3px;color:#1e1e1e">16777215</div>
<div class="a" style="left:14px;top:19px;width:185px;height:18px;background:#f5f5f5"></div>
<div class="a" style="left:200px;top:19px;width:179px;height:18px;background:#f5f5f5"></div>
<div class="a" style="left:14px;top:37px;width:365px;height:1px;background:#e6e6ea"></div>
<div class="a" style="left:199px;top:19px;width:1px;height:18px;background:#e6e6ea"></div>
<div class="t" style="left:17px;top:22px;color:#1e1e1e">Special Effect</div>
<div class="t" style="left:203px;top:22px;color:#1e1e1e">0-Flat</div>
<div class="a" style="left:14px;top:38px;width:185px;height:18px;background:#f5f5f5"></div>
<div class="a" style="left:200px;top:38px;width:179px;height:18px;background:#f5f5f5"></div>
<div class="a" style="left:14px;top:56px;width:365px;height:1px;background:#e6e6ea"></div>
<div class="a" style="left:199px;top:38px;width:1px;height:18px;background:#e6e6ea"></div>
<div class="t" style="left:17px;top:41px;color:#1e1e1e">Fore Color</div>
<div class="a" style="left:202px;top:41px;width:19px;height:14px;background:#000"></div>
<div class="t" style="left:228px;top:41px;color:#1e1e1e">0</div>
<div class="a" style="left:14px;top:57px;width:185px;height:18px;background:#f5f5f5"></div>
<div class="a" style="left:200px;top:57px;width:179px;height:18px;background:#f5f5f5"></div>
<div class="a" style="left:14px;top:75px;width:365px;height:1px;background:#e6e6ea"></div>
<div class="a" style="left:199px;top:57px;width:1px;height:18px;background:#e6e6ea"></div>
<div class="t" style="left:17px;top:60px;color:#1e1e1e">Text Align</div>
<div class="t" style="left:203px;top:60px;color:#1e1e1e">0-Left</div>
<div class="a" style="left:0;top:76px;width:379px;height:19px;background:#eeeef2"></div>
<svg class="a" style="left:2px;top:81px" width="9" height="9" viewBox="0 0 9 9"><rect x="0.5" y="0.5" width="8" height="8" fill="none" stroke="#555"/><path d="M2 4.5 L7 4.5" stroke="#111"/></svg>
<div class="t" style="left:17px;top:79px;font-weight:bold;color:#1e1e1e">Position &amp; Size</div>
<div class="a" style="left:14px;top:95px;width:185px;height:18px;background:#f5f5f5"></div>
<div class="a" style="left:200px;top:95px;width:179px;height:18px;background:#f5f5f5"></div>
<div class="a" style="left:14px;top:113px;width:365px;height:1px;background:#e6e6ea"></div>
<div class="a" style="left:199px;top:95px;width:1px;height:18px;background:#e6e6ea"></div>
<div class="t" style="left:17px;top:98px;color:#1e1e1e">Left</div>
<div class="t" style="left:203px;top:98px;color:#1e1e1e"></div>
<div class="a" style="left:14px;top:114px;width:185px;height:18px;background:#f5f5f5"></div>
<div class="a" style="left:200px;top:114px;width:179px;height:18px;background:#f5f5f5"></div>
<div class="a" style="left:14px;top:132px;width:365px;height:1px;background:#e6e6ea"></div>
<div class="a" style="left:199px;top:114px;width:1px;height:18px;background:#e6e6ea"></div>
<div class="t" style="left:17px;top:117px;color:#1e1e1e">Top</div>
<div class="t" style="left:203px;top:117px;color:#1e1e1e"></div>
<div class="a" style="left:14px;top:133px;width:185px;height:18px;background:#ececee"></div>
<div class="a" style="left:200px;top:133px;width:179px;height:18px;background:#f5f5f5"></div>
<div class="a" style="left:14px;top:151px;width:365px;height:1px;background:#e6e6ea"></div>
<div class="a" style="left:199px;top:133px;width:1px;height:18px;background:#e6e6ea"></div>
<div class="t" style="left:17px;top:136px;color:#1e1e1e">Width</div>
<div class="t" style="left:203px;top:136px;color:#1e1e1e">3,0см (1701)</div>
<div class="a" style="left:362px;top:134px;width:17px;height:18px;border:1px solid #d5d7e0;background:#f8f8f8"></div>
<div class="t" style="left:366px;top:136px;font-weight:bold;color:#111">...</div>
<div class="a" style="left:14px;top:152px;width:185px;height:18px;background:#f5f5f5"></div>
<div class="a" style="left:200px;top:152px;width:179px;height:18px;background:#f5f5f5"></div>
<div class="a" style="left:14px;top:170px;width:365px;height:1px;background:#e6e6ea"></div>
<div class="a" style="left:199px;top:152px;width:1px;height:18px;background:#e6e6ea"></div>
<div class="t" style="left:17px;top:155px;color:#1e1e1e">Height</div>
<div class="t" style="left:203px;top:155px;color:#1e1e1e">0,6см (340)</div>
<div class="a" style="left:0;top:171px;width:379px;height:19px;background:#eeeef2"></div>
<svg class="a" style="left:2px;top:176px" width="9" height="9" viewBox="0 0 9 9"><rect x="0.5" y="0.5" width="8" height="8" fill="none" stroke="#555"/><path d="M2 4.5 L7 4.5" stroke="#111"/></svg>
<div class="t" style="left:17px;top:174px;font-weight:bold;color:#1e1e1e">Border</div>
<div class="a" style="left:14px;top:190px;width:185px;height:18px;background:#f5f5f5"></div>
<div class="a" style="left:200px;top:190px;width:179px;height:18px;background:#f5f5f5"></div>
<div class="a" style="left:14px;top:208px;width:365px;height:1px;background:#e6e6ea"></div>
<div class="a" style="left:199px;top:190px;width:1px;height:18px;background:#e6e6ea"></div>
<div class="t" style="left:17px;top:193px;color:#1e1e1e">Border Style</div>
<div class="t" style="left:203px;top:193px;color:#1e1e1e">0-None</div>
<div class="a" style="left:14px;top:209px;width:185px;height:18px;background:#f5f5f5"></div>
<div class="a" style="left:200px;top:209px;width:179px;height:18px;background:#f5f5f5"></div>
<div class="a" style="left:14px;top:227px;width:365px;height:1px;background:#e6e6ea"></div>
<div class="a" style="left:199px;top:209px;width:1px;height:18px;background:#e6e6ea"></div>
<div class="t" style="left:17px;top:212px;color:#1e1e1e"></div>
<div class="a" style="left:202px;top:211px;width:19px;height:2px;background:#222"></div>
</div>
<div class="a" style="left:1261px;top:463px;width:17px;height:214px;background:#f0f0f0"></div>
<div class="a" style="left:1263px;top:518px;width:13px;height:81px;background:#c8c8c8"></div>
<svg class="a" style="left:1264px;top:469px" width="10" height="7" viewBox="0 0 10 7"><path d="M1 6 L5 2 L9 6" fill="none" stroke="#444" stroke-width="1.5"/></svg>
<svg class="a" style="left:1264px;top:663px" width="10" height="7" viewBox="0 0 10 7"><path d="M1 1 L5 5 L9 1" fill="none" stroke="#444" stroke-width="1.5"/></svg>
<div class="a" style="left:882px;top:679px;width:396px;height:59px;background:#f7f7f7;border-top:1px solid #e4e4e8"></div>
<div class="t" style="left:887px;top:685px;font-weight:bold;color:#1e1e1e">Width</div>

<div class="a" style="left:0;top:0;width:1280px;height:1px;background:#007acc"></div>
<div class="a" style="left:0;top:0;width:1px;height:759px;background:#007acc"></div>
<div class="a" style="left:1279px;top:0;width:1px;height:759px;background:#007acc"></div>
</body></html>
